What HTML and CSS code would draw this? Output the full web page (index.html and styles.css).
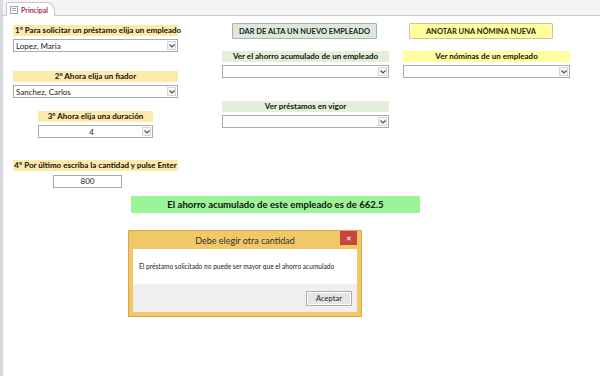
FILE: index.html
```html
<!DOCTYPE html>
<html lang="es">
<head>
<meta charset="UTF-8">
<meta name="viewport" content="width=device-width, initial-scale=1.0">
<title>Principal</title>
<link rel="stylesheet" href="styles.css">
</head>
<body>

<div class="frame">
  <div class="tabs">
    <div class="tab">
      <svg class="tab-icon" width="8" height="8" viewBox="0 0 8 8">
        <rect x="0.5" y="0.5" width="7" height="7" fill="#fff" stroke="#9aa4b4"/>
        <line x1="2" y1="2.5" x2="6" y2="2.5" stroke="#9aa4b4"/>
        <line x1="2" y1="4.5" x2="6" y2="4.5" stroke="#9aa4b4"/>
      </svg>
      <span>Principal</span>
    </div>
  </div>

  <div class="content">
    <div class="columns">
      <div class="col col-left">
        <div class="label label-orange">1º Para solicitar un préstamo elija un empleado</div>
        <div class="combo">
          <span class="combo-text">Lopez, Maria</span>
          <span class="combo-btn"><svg width="6" height="4" viewBox="0 0 6 4"><path d="M0.5 0.5 L3 3 L5.5 0.5" fill="none" stroke="#555" stroke-width="1.2"/></svg></span>
        </div>

        <div class="label label-orange gap-big center">2º Ahora elija un fiador</div>
        <div class="combo">
          <span class="combo-text">Sanchez, Carlos</span>
          <span class="combo-btn"><svg width="6" height="4" viewBox="0 0 6 4"><path d="M0.5 0.5 L3 3 L5.5 0.5" fill="none" stroke="#555" stroke-width="1.2"/></svg></span>
        </div>

        <div class="narrow">
          <div class="label label-orange center">3º Ahora elija una duración</div>
          <div class="combo">
            <span class="combo-text center">4</span>
            <span class="combo-btn"><svg width="6" height="4" viewBox="0 0 6 4"><path d="M0.5 0.5 L3 3 L5.5 0.5" fill="none" stroke="#555" stroke-width="1.2"/></svg></span>
          </div>
        </div>

        <div class="label label-orange wide center">4º Por último escriba la cantidad y pulse Enter</div>
        <div class="textbox">800</div>
      </div>

      <div class="col col-mid">
        <button class="btn btn-green">DAR DE ALTA UN NUEVO EMPLEADO</button>
        <div class="label label-green center">Ver el ahorro acumulado de un empleado</div>
        <div class="combo">
          <span class="combo-text"></span>
          <span class="combo-btn"><svg width="6" height="4" viewBox="0 0 6 4"><path d="M0.5 0.5 L3 3 L5.5 0.5" fill="none" stroke="#555" stroke-width="1.2"/></svg></span>
        </div>
        <div class="label label-green center gap-mid">Ver préstamos en vigor</div>
        <div class="combo">
          <span class="combo-text"></span>
          <span class="combo-btn"><svg width="6" height="4" viewBox="0 0 6 4"><path d="M0.5 0.5 L3 3 L5.5 0.5" fill="none" stroke="#555" stroke-width="1.2"/></svg></span>
        </div>
      </div>

      <div class="col col-right">
        <button class="btn btn-yellow">ANOTAR UNA NÓMINA NUEVA</button>
        <div class="label label-yellow center">Ver nóminas de un empleado</div>
        <div class="combo">
          <span class="combo-text"></span>
          <span class="combo-btn"><svg width="6" height="4" viewBox="0 0 6 4"><path d="M0.5 0.5 L3 3 L5.5 0.5" fill="none" stroke="#555" stroke-width="1.2"/></svg></span>
        </div>
      </div>
    </div>

    <div class="banner">El ahorro acumulado de este empleado es de 662.5</div>

    <div class="dialog">
      <div class="dialog-title">
        <span>Debe elegir otra cantidad</span>
        <span class="dialog-close">&#x2715;</span>
      </div>
      <div class="dialog-body">El préstamo solicitado no puede ser mayor que el ahorro acumulado</div>
      <div class="dialog-footer">
        <button class="dialog-btn">Aceptar</button>
      </div>
    </div>
  </div>
</div>

</body>
</html>
```

FILE: styles.css
```css
body {
  margin: 0;
  background-color: #fff;
  font-family: Lato, "Liberation Sans", sans-serif;
  color: #111;
}
.frame {
  height: 376px;
  border-left: 3px solid #d6dbe2;
  box-shadow: inset 1px 0 0 #f0f2f5;
  overflow: hidden;
}
.tabs {
  height: 15px;
  background-color: #f5f5f5;
  border-bottom: 1px solid #c8c8c8;
  padding-left: 3px;
  display: flex;
  align-items: flex-end;
}
.tab {
  height: 13px;
  width: 44px;
  background-color: #fff;
  border: 1px solid #c8c8c8;
  border-bottom: none;
  border-radius: 2px 8px 0 0;
  display: flex;
  align-items: center;
  gap: 3px;
  padding-left: 3px;
  font-size: 7px;
  font-weight: bold;
  color: #a8334a;
  margin-bottom: -1px;
}
.tab-icon {
  flex: none;
}
.content {
  padding: 7px 0 0 10px;
}
.columns {
  display: flex;
}
.col {
  display: flex;
  flex-direction: column;
}
.col-left {
  width: 172px;
  padding-top: 2px;
}
.col-left > .label,
.col-left > .combo {
  width: 165px;
}
.col-mid {
  width: 167px;
  margin-left: 37px;
}
.col-right {
  width: 167px;
  margin-left: 14px;
}
.label {
  height: 11px;
  line-height: 11px;
  font-size: 8px;
  font-weight: bold;
  padding-left: 2px;
  white-space: nowrap;
  box-sizing: border-box;
}
.center {
  text-align: center;
  padding-left: 0;
}
.label-orange {
  background-color: #fde9a9;
}
.label-green {
  background-color: #e2efda;
  margin-top: 12px;
}
.label-yellow {
  background-color: #ffff9e;
  margin-top: 12px;
}
.gap-big {
  margin-top: 19px;
}
.gap-mid {
  margin-top: 23px;
}
.combo {
  margin-top: 3px;
  height: 13px;
  box-sizing: border-box;
  border: 1px solid #a8abb0;
  background-color: #fff;
  display: flex;
  align-items: center;
  font-size: 8px;
}
.combo-text {
  flex: 1;
  padding-left: 2px;
  white-space: nowrap;
  color: #222;
}
.combo-btn {
  width: 9px;
  height: 9px;
  margin-right: 1px;
  border: 1px solid #d4d6da;
  background-color: #f6f6f6;
  display: flex;
  align-items: center;
  justify-content: center;
  box-sizing: border-box;
}
.narrow {
  width: 115px;
  margin-left: 25px;
  margin-top: 13px;
}
.wide {
  width: 172px;
  margin-top: 22px;
}
.textbox {
  width: 69px;
  height: 13px;
  margin: 4px 0 0 40px;
  box-sizing: border-box;
  border: 1px solid #a8abb0;
  font-size: 8px;
  line-height: 11px;
  text-align: center;
  color: #222;
}
.btn {
  height: 16px;
  border: 1px solid #a9b3a9;
  font-family: Lato, "Liberation Sans", sans-serif;
  font-size: 7.5px;
  font-weight: bold;
  padding: 0;
  color: #222;
  border-radius: 1px;
}
.btn-green {
  width: 145px;
  margin-left: 10px;
  background-color: #dde8dc;
}
.btn-yellow {
  width: 144px;
  margin-left: 6px;
  background-color: #fefe9c;
  border-color: #c9c98a;
}
.banner {
  width: 289px;
  height: 17px;
  line-height: 17px;
  margin: 8px 0 0 118px;
  background-color: #99f597;
  text-align: center;
  font-size: 9.6px;
  font-weight: bold;
}
.dialog {
  width: 234px;
  margin: 17px 0 0 115px;
  background-color: #f1c867;
  border: 1px solid #d6a94a;
  box-sizing: border-box;
  padding: 0 4px 4px;
}
.dialog-title {
  height: 18px;
  display: flex;
  align-items: center;
  justify-content: center;
  font-size: 9px;
  color: #333;
  position: relative;
}
.dialog-close {
  position: absolute;
  right: 0;
  top: 0;
  width: 17px;
  height: 14px;
  background-color: #c7453f;
  color: #fff;
  font-size: 7px;
  display: flex;
  align-items: center;
  justify-content: center;
}
.dialog-body {
  background-color: #fff;
  height: 35px;
  padding: 13px 0 0 6px;
  box-sizing: border-box;
  font-size: 6.6px;
  color: #222;
}
.dialog-footer {
  background-color: #efefef;
  height: 28px;
  display: flex;
  justify-content: flex-end;
  align-items: center;
  padding-right: 5px;
}
.dialog-btn {
  width: 46px;
  height: 15px;
  border: 1px solid #adadad;
  background-color: #e5e5e5;
  font-family: Lato, "Liberation Sans", sans-serif;
  font-size: 7.5px;
  color: #222;
  padding: 0;
  box-shadow: inset 0 0 0 1px #fff;
}
```
